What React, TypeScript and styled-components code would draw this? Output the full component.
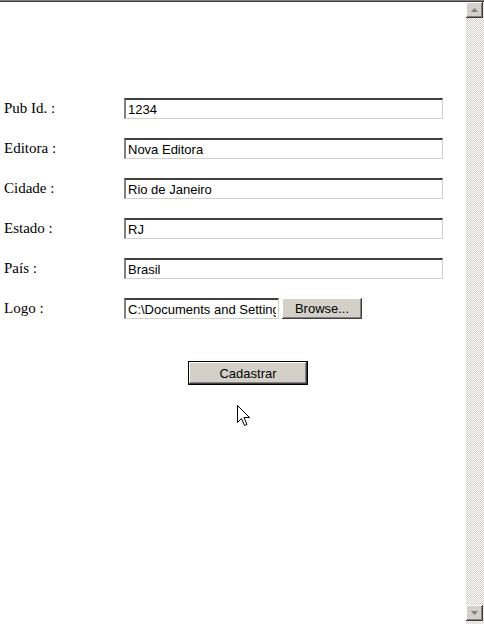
import * as React from 'react';
import styled, { createGlobalStyle } from 'styled-components';

const GlobalStyle = createGlobalStyle`
  html, body {
    margin: 0;
    padding: 0;
    background: #ffffff;
  }
`;

const Frame = styled.div`
  position: relative;
  width: 484px;
  height: 624px;
  box-sizing: border-box;
  border-top: 1px solid #808080;
  box-shadow: inset 0 1px 0 #404040;
  display: flex;
  overflow: hidden;
  background: #ffffff;
`;

const Content = styled.main`
  flex: 1;
  padding-top: 97px;
  display: flex;
  flex-direction: column;
`;

const Form = styled.div`
  display: flex;
  flex-direction: column;
  gap: 19px;
`;

const Row = styled.div`
  display: flex;
  align-items: center;
  height: 21px;
`;

const Label = styled.span`
  width: 120px;
  padding-left: 4px;
  font-family: 'Liberation Serif', 'Times New Roman', serif;
  font-size: 15px;
  color: #000;
`;

const Field = styled.input<{ $width: number }>`
  box-sizing: border-box;
  width: ${(p) => p.$width}px;
  height: 21px;
  margin: 0;
  padding: 1px 2px 0 2px;
  font-family: 'Liberation Sans', Arial, sans-serif;
  font-size: 13px;
  color: #000;
  background: #ffffff;
  border-style: solid;
  border-width: 2px 1px 1px 2px;
  border-color: #404040 #d4d0c8 #d4d0c8 #808080;
  outline: none;
`;

const FileGroup = styled.div`
  display: flex;
  gap: 3px;
`;

const WinButton = styled.button<{ $width: number; $default?: boolean }>`
  box-sizing: border-box;
  width: ${(p) => p.$width}px;
  height: ${(p) => (p.$default ? 24 : 21)}px;
  margin: 0;
  padding: 0;
  font-family: 'Liberation Sans', Arial, sans-serif;
  font-size: 13px;
  color: #000;
  background: #d4d0c8;
  border: ${(p) => (p.$default ? '1px solid #000' : 'none')};
  box-shadow: inset -1px -1px 0 #404040, inset 1px 1px 0 #ffffff,
    inset -2px -2px 0 #808080;
`;

const SubmitRow = styled.div`
  padding: 42px 0 0 188px;
`;

const Scrollbar = styled.div`
  width: 18px;
  margin-top: 1px;
  display: flex;
  flex-direction: column;
  justify-content: space-between;
  background: repeating-conic-gradient(#d4d0c8 0 25%, #ffffff 0 50%) 0 0 / 2px 2px;
`;

const ScrollButton = styled.div`
  box-sizing: border-box;
  width: 17px;
  height: 16px;
  margin-bottom: 3px;
  background: #d4d0c8;
  box-shadow: inset -1px -1px 0 #404040, inset 1px 1px 0 #ffffff,
    inset -2px -2px 0 #808080;
  display: flex;
  align-items: center;
  justify-content: center;
`;

const Cursor = styled.svg`
  position: absolute;
  left: 237px;
  top: 404px;
`;

const Arrow: React.FC<{ up?: boolean }> = ({ up }) => (
  <svg width="7" height="4" viewBox="0 0 7 4">
    <path d={up ? 'M3.5 0 L7 4 L0 4 Z' : 'M0 0 L7 0 L3.5 4 Z'} fill="#808080" />
  </svg>
);

const fields = [
  { label: 'Pub Id. :', value: '1234' },
  { label: 'Editora :', value: 'Nova Editora' },
  { label: 'Cidade :', value: 'Rio de Janeiro' },
  { label: 'Estado :', value: 'RJ' },
  { label: 'País :', value: 'Brasil' },
];

const App: React.FC = () => {
  return (
    <>
      <GlobalStyle />
      <Frame>
        <Content>
          <Form>
            {fields.map((f) => (
              <Row key={f.label}>
                <Label>{f.label}</Label>
                <Field $width={319} defaultValue={f.value} />
              </Row>
            ))}
            <Row>
              <Label>Logo :</Label>
              <FileGroup>
                <Field $width={155} defaultValue="C:\Documents and Settings\logo.jpg" />
                <WinButton $width={80}>Browse...</WinButton>
              </FileGroup>
            </Row>
          </Form>
          <SubmitRow>
            <WinButton $width={120} $default>
              Cadastrar
            </WinButton>
          </SubmitRow>
        </Content>
        <Scrollbar>
          <ScrollButton>
            <Arrow up />
          </ScrollButton>
          <ScrollButton>
            <Arrow />
          </ScrollButton>
        </Scrollbar>
        <Cursor width="14" height="23" viewBox="0 0 14 23">
          <path
            d="M0.5 0.5 L0.5 17.5 L4.5 13.5 L7.5 20.5 L10 19.5 L7 12.5 L12.5 12.5 Z"
            fill="#ffffff"
            stroke="#000000"
            strokeWidth="1"
          />
        </Cursor>
      </Frame>
    </>
  );
};

export default App;
